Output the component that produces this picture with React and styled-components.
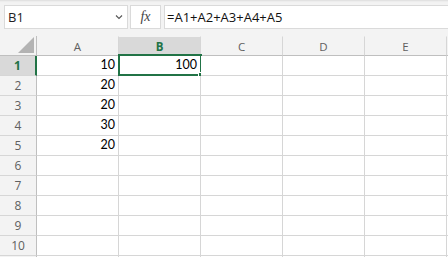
import React from 'react';
import styled, { createGlobalStyle } from 'styled-components';

const GREEN = '#217346';
const GRID = '#d6d6d6';
const HEAD_LINE = '#bfbfbf';

const columns = ['A', 'B', 'C', 'D', 'E'];
const values = { A1: '10', A2: '20', A3: '20', A4: '30', A5: '20', B1: '100' };

function App() {
  // row 11 only peeks in by one pixel, so it gets no label
  const rows = Array.from({ length: 11 }, (_, i) => i + 1);

  return (
    <>
      <GlobalStyle />
      <Window>
        <Toolbar>
          <NameBox>
            <span>B1</span>
            <svg width="8" height="6" viewBox="0 0 8 6">
              <polyline points="1,1.5 4,4.5 7,1.5" fill="none" stroke="#555" strokeWidth="1.1" />
            </svg>
          </NameBox>
          <FxBox>fx</FxBox>
          <FormulaInput>=A1+A2+A3+A4+A5</FormulaInput>
        </Toolbar>
        <Sheet>
          <Corner>
            <svg width="16" height="16" viewBox="0 0 16 16">
              <polygon points="16,0 16,16 0,16" fill="#b3b3b3" />
            </svg>
          </Corner>
          {columns.map((c) => (
            <ColHeader key={c} $active={c === 'B'}>{c}</ColHeader>
          ))}
          <ColHeader />
          {rows.map((r) => (
            <React.Fragment key={r}>
              <RowHeader $active={r === 1}>{r <= 10 ? r : ''}</RowHeader>
              {columns.map((c) => {
                const id = c + r;
                const selected = id === 'B1';
                return (
                  <Cell key={id} $selected={selected}>
                    {values[id]}
                    {selected && (
                      <SelectionFrame>
                        <FillHandle />
                      </SelectionFrame>
                    )}
                  </Cell>
                );
              })}
              <Cell />
            </React.Fragment>
          ))}
        </Sheet>
      </Window>
    </>
  );
}

export default App;

const GlobalStyle = createGlobalStyle`
  html, body {
    margin: 0;
    padding: 0;
    background: #ffffff;
  }
`;

const Window = styled.div`
  width: 448px;
  height: 257px;
  overflow: hidden;
  background: #f3f3f3;
  font-family: "Open Sans", "Noto Sans", sans-serif;
`;

const Toolbar = styled.div`
  display: flex;
  gap: 2px;
  height: 24px;
  padding: 5px 0 7px 4px;
  background: #f3f3f3;
  box-shadow: inset 0 3px 2px -2px #dcdcdc;
`;

const Box = styled.div`
  box-sizing: border-box;
  height: 24px;
  background: #ffffff;
  border: 1px solid #dadada;
  display: flex;
  align-items: center;
`;

const NameBox = styled(Box)`
  width: 124px;
  padding: 0 4px 0 3px;
  justify-content: space-between;
  font-size: 13px;
  color: #222;
`;

const FxBox = styled(Box)`
  width: 31px;
  justify-content: center;
  font-family: "Liberation Serif", "DejaVu Serif", serif;
  font-style: italic;
  font-size: 14px;
  color: #444;
`;

const FormulaInput = styled(Box)`
  flex: 1;
  margin-left: 1px;
  padding-left: 2px;
  border-right: none;
  font-size: 13px;
  color: #111;
`;

const Sheet = styled.div`
  display: grid;
  grid-template-columns: 37px repeat(5, 82px) 1fr;
  grid-template-rows: 20px;
  grid-auto-rows: 20px;
  background: #ffffff;
`;

const HeaderBase = styled.div`
  box-sizing: border-box;
  display: flex;
  align-items: center;
  justify-content: center;
  background: ${(p) => (p.$active ? '#d9d9d9' : '#f3f3f3')};
  color: ${(p) => (p.$active ? GREEN : '#606060')};
  font-weight: ${(p) => (p.$active ? 700 : 400)};
`;

const Corner = styled(HeaderBase)`
  align-items: flex-end;
  justify-content: flex-end;
  padding: 0 2px 2px 0;
  border-right: 1px solid ${HEAD_LINE};
  border-bottom: 1px solid ${HEAD_LINE};
`;

const ColHeader = styled(HeaderBase)`
  font-size: 11.5px;
  padding-top: 1px;
  border-right: 1px solid ${GRID};
  border-bottom: ${(p) => (p.$active ? `2px solid ${GREEN}` : `1px solid ${HEAD_LINE}`)};
  border-top: 1px solid #f3f3f3;
`;

const RowHeader = styled(HeaderBase)`
  font-size: 12px;
  border-right: ${(p) => (p.$active ? `2px solid ${GREEN}` : `1px solid ${HEAD_LINE}`)};
  border-bottom: 1px solid ${GRID};
`;

const Cell = styled.div`
  box-sizing: border-box;
  position: relative;
  display: flex;
  align-items: flex-end;
  justify-content: flex-end;
  padding: 0 3px 3px 0;
  background: #ffffff;
  border-right: 1px solid ${GRID};
  border-bottom: 1px solid ${GRID};
  font-family: Lato, "Open Sans", sans-serif;
  font-size: 12.5px;
  line-height: 14px;
  color: #000;
`;

const SelectionFrame = styled.div`
  position: absolute;
  left: -1px;
  top: -2px;
  width: 84px;
  height: 22px;
  box-sizing: border-box;
  border: 2px solid ${GREEN};
  pointer-events: none;
`;

const FillHandle = styled.div`
  position: absolute;
  right: -4px;
  bottom: -4px;
  width: 5px;
  height: 5px;
  background: ${GREEN};
  outline: 1px solid #ffffff;
`;
